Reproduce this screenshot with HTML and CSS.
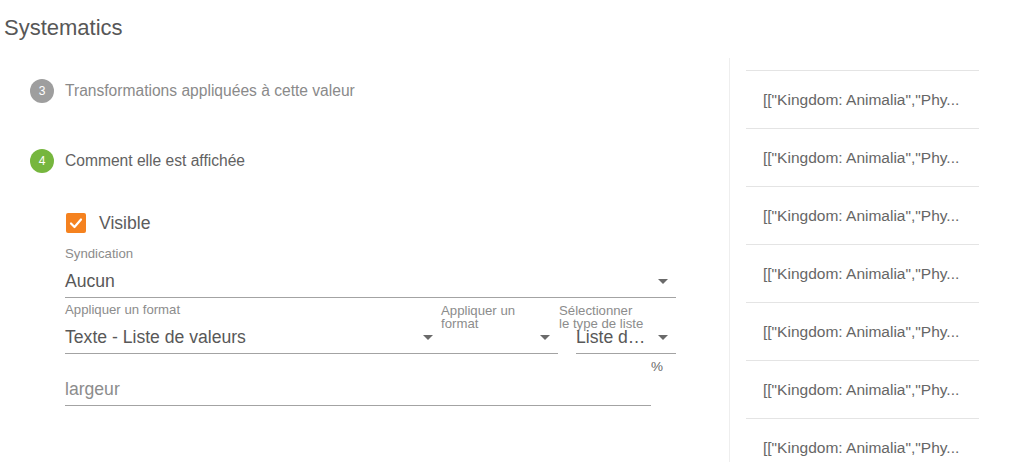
FILE: index.html
```html
<!DOCTYPE html>
<html lang="fr">
<head>
<meta charset="utf-8">
<title>Systematics</title>
<link rel="stylesheet" href="styles.css">
</head>
<body>
<h1 class="title">Systematics</h1>
<div class="layout">
  <div class="main">
    <div class="step step-done">
      <span class="step-num">3</span>
      <span class="step-label">Transformations appliquées à cette valeur</span>
    </div>
    <div class="step step-active">
      <span class="step-num">4</span>
      <span class="step-label">Comment elle est affichée</span>
    </div>
    <div class="form">
      <div class="check">
        <span class="box"><svg width="20" height="20" viewBox="0 0 20 20"><polyline points="5,10.5 8.5,14 15,6.5" fill="none" stroke="#fff" stroke-width="2.2" stroke-linecap="round" stroke-linejoin="round"/></svg></span>
        <span class="check-label">Visible</span>
      </div>
      <div class="field f-syn">
        <div class="label">Syndication</div>
        <div class="select"><span class="value">Aucun</span><span class="arrow"></span></div>
      </div>
      <div class="row">
        <div class="field f-format">
          <div class="label">Appliquer un format</div>
          <div class="select"><span class="value">Texte - Liste de valeurs</span><span class="arrow"></span></div>
        </div>
        <div class="field f-format2">
          <div class="label label-wrap l-format2">Appliquer un format</div>
          <div class="select"><span class="value"></span><span class="arrow"></span></div>
        </div>
        <div class="field f-type">
          <div class="label label-wrap l-type">Sélectionner le type de liste</div>
          <div class="select"><span class="value">Liste d…</span><span class="arrow"></span></div>
        </div>
      </div>
      <div class="row row-width">
        <div class="field f-width">
          <div class="select"><span class="value placeholder">largeur</span></div>
        </div>
        <span class="unit">%</span>
      </div>
    </div>
  </div>
  <div class="side">
    <div class="item">[["Kingdom: Animalia","Phy...</div>
    <div class="item">[["Kingdom: Animalia","Phy...</div>
    <div class="item">[["Kingdom: Animalia","Phy...</div>
    <div class="item">[["Kingdom: Animalia","Phy...</div>
    <div class="item">[["Kingdom: Animalia","Phy...</div>
    <div class="item">[["Kingdom: Animalia","Phy...</div>
    <div class="item">[["Kingdom: Animalia","Phy...</div>
  </div>
</div>
</body>
</html>
```

FILE: styles.css
```css
html, body {
  margin: 0;
  padding: 0;
  overflow: hidden;
  background: #fff;
}
body {
  font-family: "Liberation Sans", Arial, sans-serif;
  color: #555;
}
.title {
  margin: 15px 0 0;
  padding-left: 4px;
  font-size: 22px;
  line-height: 26px;
  font-weight: normal;
  color: #575757;
}
.layout {
  display: flex;
  margin-top: 17px;
}
.main {
  flex: 0 0 729px;
}
.step {
  display: flex;
  align-items: center;
  padding-left: 30px;
  height: 24px;
}
.step-done { margin-top: 21px; }
.step-active { margin-top: 46px; }
.step-num {
  width: 24px;
  height: 24px;
  border-radius: 50%;
  display: flex;
  align-items: center;
  justify-content: center;
  color: #fff;
  font-size: 12px;
  margin-right: 11px;
}
.step-done .step-num { background: #9e9e9e; }
.step-active .step-num { background: #76b63e; }
.step-label { font-size: 15.6px; }
.step-done .step-label { color: #8a8a8a; }
.step-active .step-label { color: #626262; }

.form {
  margin-top: 40px;
  padding-left: 65px;
}
.check {
  display: flex;
  align-items: center;
  height: 20px;
  padding-left: 1px;
}
.box {
  width: 20px;
  height: 20px;
  border-radius: 2px;
  background: #f5821f;
  display: block;
  margin-right: 13px;
}
.box svg { display: block; }
.check-label {
  font-size: 17.6px;
  color: #5c5c5c;
}
.field { box-sizing: border-box; }
.f-syn { width: 611px; margin-top: 13px; }
.label {
  font-size: 13.2px;
  line-height: 15px;
  height: 15px;
  color: #8c8c8c;
  margin-bottom: 8px;
  white-space: nowrap;
}
.label-wrap {
  white-space: normal;
  line-height: 13px;
  box-sizing: border-box;
  padding-top: 1.5px;
}
.l-format2 { width: 100px; }
.l-type { width: 85.5px; margin-left: -17px; }
.select {
  display: flex;
  align-items: center;
  height: 24px;
  padding-bottom: 4px;
  padding-right: 8px;
  border-bottom: 1px solid #a3a3a3;
}
.value {
  flex: 1;
  min-width: 0;
  font-size: 17.6px;
  line-height: 24px;
  color: #585858;
  white-space: nowrap;
}
.placeholder { color: #8c8c8c; }
.arrow {
  width: 0;
  height: 0;
  border-left: 5px solid transparent;
  border-right: 5px solid transparent;
  border-top: 5px solid #6a6a6a;
}
.row {
  display: flex;
  align-items: flex-start;
  margin-top: 4px;
}
.f-format { width: 376px; }
.f-format2 { width: 117px; }
.f-type { width: 100px; margin-left: 18px; }
.row-width { margin-top: 5px; }
.f-width { width: 586px; padding-top: 18px; }
.unit {
  font-size: 13.5px;
  line-height: 16px;
  color: #6a6a6a;
}
.side {
  flex: 0 0 233px;
  border-left: 1px solid #eeeeee;
  padding: 12px 0 0 16px;
}
.item {
  width: 233px;
  height: 58px;
  border-top: 1px solid #e4e4e4;
  padding-left: 17px;
  box-sizing: border-box;
  display: flex;
  align-items: center;
  font-size: 15.5px;
  color: #666;
  white-space: nowrap;
}
```
